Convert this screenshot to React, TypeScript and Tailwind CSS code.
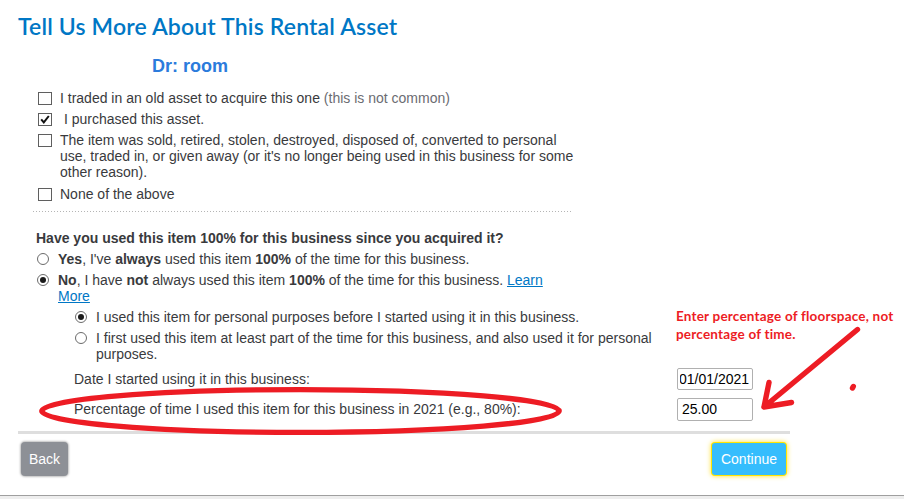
import type { ReactNode } from 'react';

function Checkbox({ checked = false }: { checked?: boolean }) {
  return (
    <span className="mt-[2px] block h-[13px] w-[14px] shrink-0 border border-[#5f5f5f] bg-white">
      {checked && (
        <svg viewBox="0 0 12 11" className="block h-[11px] w-[12px]" fill="none" stroke="#111" strokeWidth="2">
          <path d="M2.200 5.400 4.800 8.400 9.800 2" />
        </svg>
      )}
    </span>
  );
}

function Radio({ checked = false }: { checked?: boolean }) {
  return (
    <span className="mt-[2px] flex size-[12px] shrink-0 items-center justify-center rounded-full border border-[#6b6b6b] bg-white">
      {checked && <span className="size-[6px] rounded-full bg-[#1a1a1a]" />}
    </span>
  );
}

function Row({ control, gap, children }: { control: ReactNode; gap: string; children: ReactNode }) {
  return (
    <div className={`flex items-start ${gap}`}>
      {control}
      <span className="whitespace-nowrap">{children}</span>
    </div>
  );
}

export default function App() {
  return (
    <div className="relative flex h-[499px] w-[904px] flex-col overflow-hidden bg-white font-['Liberation_Sans',Arial,sans-serif] text-[14px] leading-[16px] text-[#393a3d]">
      <h1 className="mt-[12px] ml-[18px] font-['Lato',sans-serif] text-[23px] leading-[28px] font-semibold tracking-[0.160px] whitespace-nowrap text-[#0077c5]">
        Tell Us More About This Rental Asset
      </h1>
      <h2 className="mt-[15px] ml-[152px] text-[18px] leading-[22px] font-bold text-[#2b7bdc]">Dr: room</h2>

      <div className="mt-[13px] ml-[38px] flex flex-col gap-[5px]">
        <Row control={<Checkbox />} gap="gap-[8px]">
          I traded in an old asset to acquire this one <span className="text-[#6b6c72]">(this is not common)</span>
        </Row>
        <Row control={<Checkbox checked />} gap="gap-[12px]">I purchased this asset.</Row>
        <Row control={<Checkbox />} gap="gap-[8px]">
          The item was sold, retired, stolen, destroyed, disposed of, converted to personal
          <br />
          use, traded in, or given away (or it's no longer being used in this business for some
          <br />
          other reason).
        </Row>
        <div className="pt-px">
          <Row control={<Checkbox />} gap="gap-[8px]">None of the above</Row>
        </div>
      </div>

      <div className="mt-[9px] ml-[33px] h-px w-[538px] bg-[repeating-linear-gradient(90deg,#b5b5b5_0_1px,transparent_1px_3px)]" />

      <p className="mt-[18px] ml-[36px] font-bold">Have you used this item 100% for this business since you acquired it?</p>
      <div className="mt-[5px] ml-[37px] flex flex-col gap-[5px]">
        <Row control={<Radio />} gap="gap-[9px]">
          <b>Yes</b>, I've <b>always</b> used this item <b>100%</b> of the time for this business.
        </Row>
        <Row control={<Radio checked />} gap="gap-[9px]">
          <b>No</b>, I have <b>not</b> always used this item <b>100%</b> of the time for this business.{' '}
          <a className="text-[#0077c5] underline">
            Learn
            <br />
            More
          </a>
        </Row>
      </div>
      <div className="mt-[5px] ml-[75px] flex flex-col gap-[5px]">
        <Row control={<Radio checked />} gap="gap-[9px]">
          I used this item for personal purposes before I started using it in this business.
        </Row>
        <Row control={<Radio />} gap="gap-[9px]">
          I first used this item at least part of the time for this business, and also used it for personal
          <br />
          purposes.
        </Row>
      </div>

      <div className="mt-[6px] ml-[74px] flex h-[22px] w-[679px] items-center justify-between">
        <span>Date I started using it in this business:</span>
        <span className="flex h-[22px] w-[76px] items-center rounded-[2px] border border-[#b0b0b0] pl-[2px] text-black">
          <span className="w-[71px] overflow-hidden whitespace-nowrap">
            <span className="-ml-px">01/01/2021</span>
          </span>
        </span>
      </div>
      <div className="mt-[8px] ml-[74px] flex h-[23px] w-[679px] items-start justify-between">
        <span className="mt-[3px]">Percentage of time I used this item for this business in 2021 (e.g., 80%):</span>
        <span className="h-[23px] w-[76px] rounded-[2px] border border-[#b0b0b0] pt-[2px] pl-[4px] text-black">25.00</span>
      </div>

      <div className="mt-[10px] ml-[18px] h-[3px] w-[772px] bg-[#dedede]" />

      <div className="mt-[8px] mr-[118px] ml-[21px] flex items-start justify-between">
        <button className="h-[34px] w-[47px] rounded-[4px] bg-[#8d9096] text-white shadow-[0_0_2px_1px_rgba(0,0,0,0.25)]">Back</button>
        <button className="mt-px h-[32px] w-[74px] rounded-[3px] bg-[#35bdfd] text-white shadow-[0_0_0_1px_#ffe600,0_0_5px_1px_#ffdf30]">
          Continue
        </button>
      </div>
      <div className="mt-auto h-[4px] shrink-0 border-t border-[#9f9f9f] bg-[#eeeeee]" />

      <p className="absolute top-[307px] left-[676px] font-['Lato',sans-serif] text-[13.500px] leading-[18px] font-bold tracking-[0.200px] whitespace-nowrap text-[#ed1c24] [font-variant-ligatures:none]">
        Enter percentage of floorspace, not
        <br />
        percentage of time.
      </p>
      <svg className="pointer-events-none absolute inset-0" width="904" height="499" fill="none" stroke="#ed1c24" strokeWidth="5.4" strokeLinecap="round" strokeLinejoin="round">
        <ellipse cx="300.5" cy="411" rx="258.700" ry="21.400" />
        <path d="M857.500 329.500 764 407M769 382.500 764 407 791.500 402.500" />
        <path d="M852.500 388 853.300 386.500" />
      </svg>
    </div>
  );
}
